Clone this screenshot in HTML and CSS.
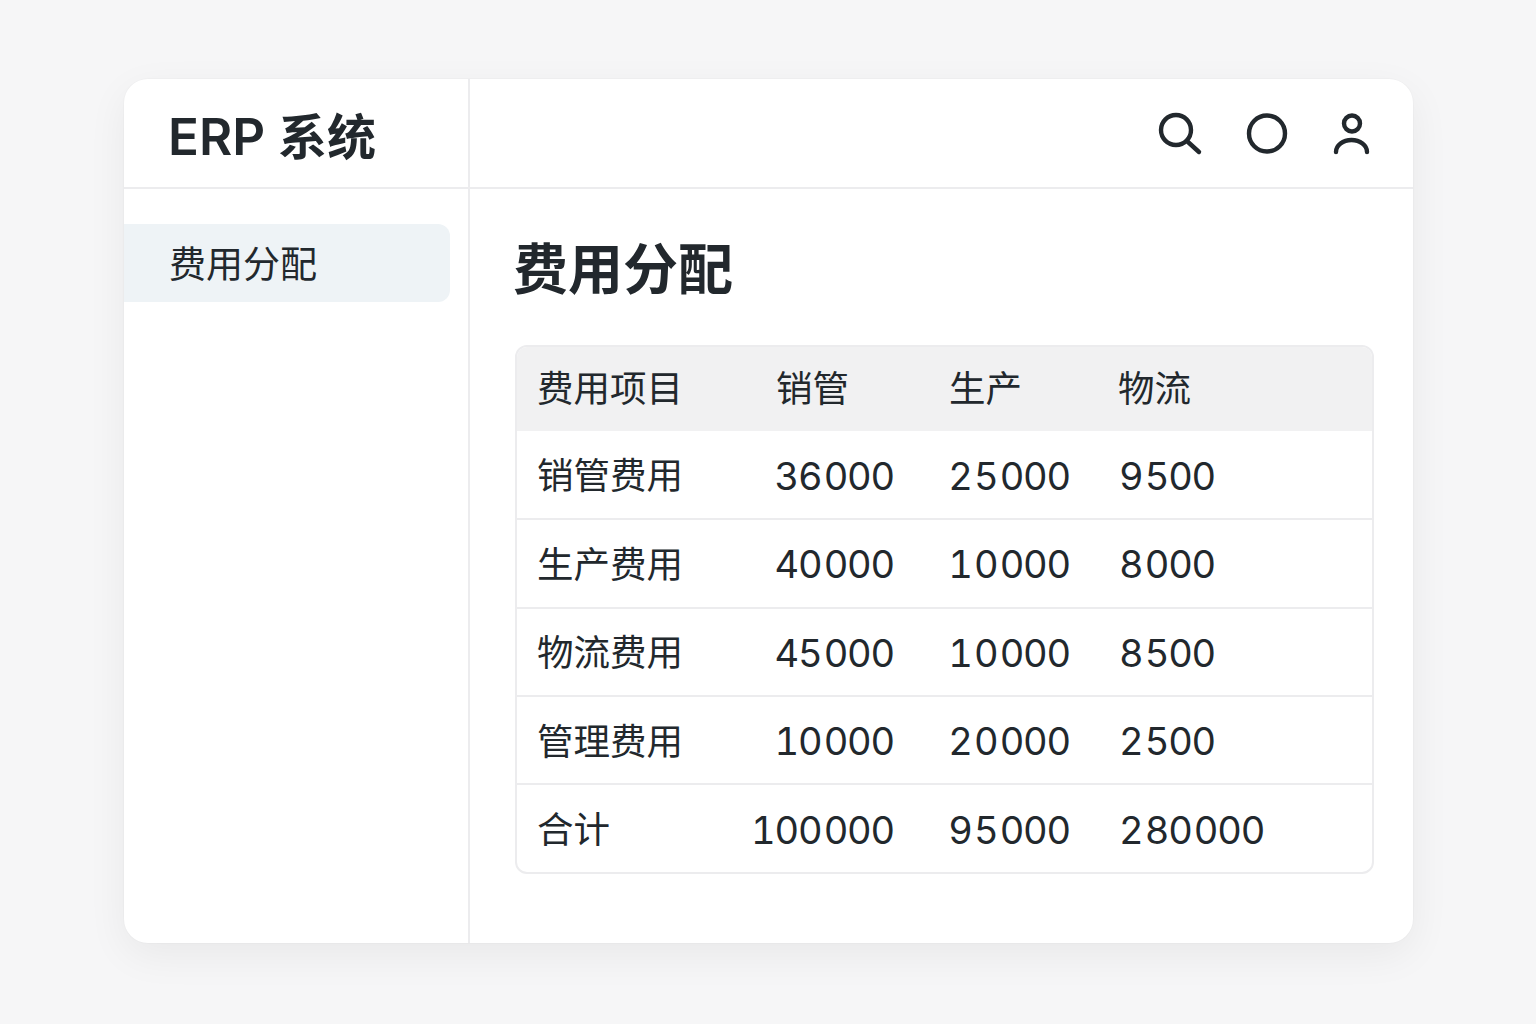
FILE: index.html
```html
<!DOCTYPE html>
<html lang="zh-CN">
<head>
<meta charset="utf-8">
<title>ERP 系统</title>
<link rel="stylesheet" href="styles.css">
</head>
<body>
<div class="card">
  <header class="top">
    <div class="brand">ERP <span class="brand-cjk">系统</span></div>
    <div class="tools">
      <svg class="icon" width="46" height="46" viewBox="0 0 46 46"><circle cx="19" cy="19" r="15"/><path d="M31 31 L42 41"/></svg>
      <svg class="icon" width="42" height="46" viewBox="0 0 42 46"><circle cx="21" cy="22.5" r="18"/></svg>
      <svg class="icon icon-user" width="38" height="46" viewBox="0 0 38 46"><circle cx="20" cy="12.5" r="8"/><path d="M4 41 A15.5 12 0 0 1 35 41"/></svg>
    </div>
  </header>
  <div class="body">
    <aside class="side">
      <div class="nav-item">费用分配</div>
    </aside>
    <main class="main">
      <h1 class="title">费用分配</h1>
      <div class="table-wrap">
        <table class="grid">
          <thead>
            <tr><th class="c1">费用项目</th><th class="c2">销管</th><th class="c3">生产</th><th class="c4">物流</th></tr>
          </thead>
          <tbody>
            <tr><td>销管费用</td><td class="num">36&#8202;000</td><td class="num">2&#8202;5&#8202;000</td><td class="lnum">9&#8202;500</td></tr>
            <tr><td>生产费用</td><td class="num">40&#8202;000</td><td class="num">1&#8202;0&#8202;000</td><td class="lnum">8&#8202;000</td></tr>
            <tr><td>物流费用</td><td class="num">45&#8202;000</td><td class="num">1&#8202;0&#8202;000</td><td class="lnum">8&#8202;500</td></tr>
            <tr><td>管理费用</td><td class="num">10&#8202;000</td><td class="num">2&#8202;0&#8202;000</td><td class="lnum">2&#8202;500</td></tr>
            <tr><td>合计</td><td class="num">100&#8202;000</td><td class="num">9&#8202;5&#8202;000</td><td class="lnum">2&#8202;80&#8202;000</td></tr>
          </tbody>
        </table>
      </div>
    </main>
  </div>
</div>
</body>
</html>
```
FILE: styles.css
```css
* { box-sizing: border-box; }
html, body { margin: 0; height: 100%; }
body {
  background: #f6f6f7;
  font-family: Inter, "Noto Sans CJK SC", sans-serif;
  color: #22282d;
  padding: 79px 123px 81px 124px;
}
.card {
  height: 864px;
  background: #fff;
  border-radius: 24px;
  box-shadow: 0 12px 40px rgba(0,0,0,.06), 0 0 0 1px rgba(0,0,0,.015);
  display: flex;
  flex-direction: column;
  overflow: hidden;
}
.top {
  height: 110px;
  flex: none;
  display: flex;
  border-bottom: 2px solid #ececee;
}
.brand {
  width: 346px;
  border-right: 2px solid #ececee;
  padding: 27px 0 0 44px;
  font-size: 51px;
  line-height: 62px;
  font-weight: 600;
  white-space: nowrap;
}
.brand-cjk { font-size: 49px; }
.tools {
  flex: 1;
  display: flex;
  justify-content: flex-end;
  align-items: flex-start;
  gap: 43px;
  padding: 32px 43px 0 0;
}
.icon { fill: none; stroke: #22282d; stroke-width: 4.4; stroke-linecap: round; display: block; }
.icon-user { margin-left: 1px; }
.body { flex: 1; display: flex; min-height: 0; }
.side {
  width: 346px;
  flex: none;
  border-right: 2px solid #ececee;
  padding-top: 35px;
}
.nav-item {
  width: 326px;
  height: 78px;
  background: #eef3f6;
  border-radius: 0 12px 12px 0;
  padding-left: 45px;
  font-size: 37px;
  line-height: 82px;
}
.main { flex: 1; padding: 46px 39px 0 45px; }
.title {
  margin: 0 0 42px -2px;
  font-size: 55px;
  line-height: 68px;
  font-weight: 700;
}
.table-wrap {
  border: 2px solid #ececee;
  border-radius: 12px;
  overflow: hidden;
  width: 859px;
}
.grid {
  width: 100%;
  border-collapse: collapse;
  table-layout: fixed;
  font-size: 36.5px;
}
.grid th, .grid td {
  font-weight: 400;
  padding: 0 0 0 20px;
  text-align: left;
  white-space: nowrap;
}
.grid th { background: #f1f1f2; height: 84px; padding-bottom: 6px; }
.grid td { height: 88.3px; border-top: 2px solid #ececee; padding-bottom: 2px; }
.grid thead + tbody tr:first-child td { border-top: 0; }
.c1 { width: 200px; }
.c2 { width: 177px; }
.c3 { width: 176px; }
.grid th.c2 { padding-left: 59px; }
.grid th.c3 { padding-left: 55px; }
.grid th.c4 { padding-left: 48px; }
.grid td.num, .grid td.lnum { font-size: 38px; letter-spacing: -1.2px; font-variant-numeric: tabular-nums; padding-bottom: 0; padding-top: 2px; }
.grid td.num { text-align: right; padding-left: 0; }
.grid td.lnum { padding-left: 49px; }
```
